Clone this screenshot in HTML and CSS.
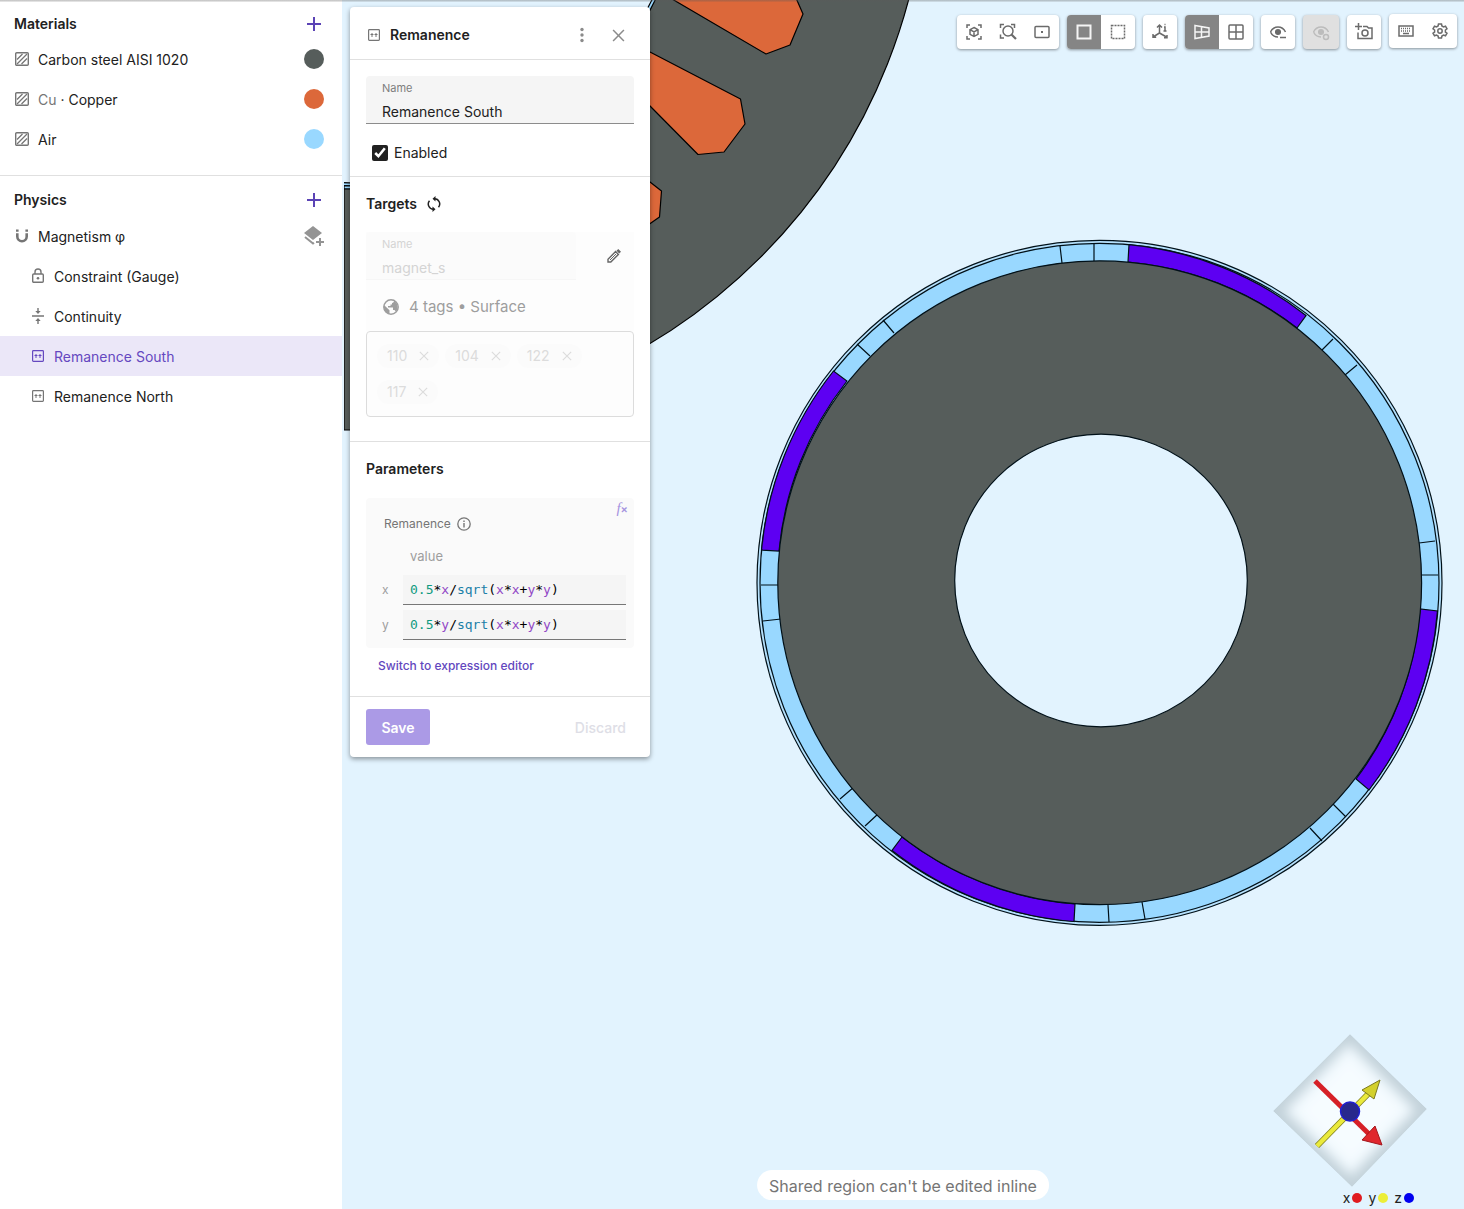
FILE: index.html
```html
<!DOCTYPE html>
<html lang="en">
<head>
    <meta charset="UTF-8">
    <meta name="viewport" content="width=device-width, initial-scale=1.0">
    <title>Magnetism - Remanence South</title>
    <link rel="stylesheet" href="styles.css">
</head>
<body>
    <!-- Shared icons -->
    <svg class="sprite" aria-hidden="true">
        <symbol id="i-plus" viewBox="0 0 16 16"><path d="M8 1v14M1 8h14" fill="none" stroke="currentColor" stroke-width="2"/></symbol>
        <symbol id="i-hatch" viewBox="0 0 14 14"><g fill="none" stroke="currentColor"><rect x=".7" y=".7" width="12.6" height="12.6" rx="1" stroke-width="1.400"/><path d="M2 7.500L7.500 2M2 12L12 2M6.500 12L12 6.500" stroke-width="1.300"/></g></symbol>
        <symbol id="i-rem" viewBox="0 0 12 12"><g fill="none" stroke="currentColor"><rect x=".6" y=".6" width="10.800" height="10.800" rx=".8" stroke-width="1.200"/><path d="M4 8V4M8 8V4M2.500 5.500h3M6.500 5.500h3" stroke-width="1"/></g></symbol>
        <symbol id="i-x" viewBox="0 0 12 12"><path d="M1 1l10 10M11 1L1 11" fill="none" stroke="currentColor" stroke-width="1.400"/></symbol>
        <symbol id="i-eye" viewBox="0 0 18 18"><path d="M1.500 9Q4 4 9 4t7.500 5M1.500 9Q4 14 9 14" fill="none" stroke="currentColor" stroke-width="1.500"/><circle cx="9" cy="9" r="2.300" fill="currentColor"/></symbol>
    </svg>

    <div class="app">
        <aside class="sidebar">
            <section class="group">
                <header class="group-head">
                    <h2>Materials</h2>
                    <button class="add" aria-label="Add material"><svg width="16" height="16"><use href="#i-plus"/></svg></button>
                </header>
                <ul>
                    <li class="row"><svg class="icon" width="14" height="14"><use href="#i-hatch"/></svg><span class="title">Carbon steel AISI 1020</span><i class="swatch steel"></i></li>
                    <li class="row"><svg class="icon" width="14" height="14"><use href="#i-hatch"/></svg><span class="title"><span class="symbol">Cu</span> · Copper</span><i class="swatch copper"></i></li>
                    <li class="row"><svg class="icon" width="14" height="14"><use href="#i-hatch"/></svg><span class="title">Air</span><i class="swatch air"></i></li>
                </ul>
            </section>
            <section class="group">
                <header class="group-head">
                    <h2>Physics</h2>
                    <button class="add" aria-label="Add physics"><svg width="16" height="16"><use href="#i-plus"/></svg></button>
                </header>
                <ul>
                    <li class="row">
                        <svg class="icon" width="14" height="14" viewBox="0 0 14 14"><path d="M2.300 4.300v3.200a4.700 4.700 0 0 0 9.400 0V4.300" fill="none" stroke="currentColor" stroke-width="2.600"/><path d="M1 .5h2.600v2.200H1zM10.400.5H13v2.200h-2.600z" fill="currentColor"/></svg>
                        <span class="title">Magnetism φ</span>
                        <button class="layers" aria-label="Add interaction"><svg width="20" height="20" viewBox="0 0 20 20"><path d="M9 0l9 7-9 7-9-7z" fill="currentColor"/><path d="M1 11l8 6.500 1-.8M16 12v8M12 16h8" fill="none" stroke="currentColor" stroke-width="2"/></svg></button>
                    </li>
                    <li class="row child">
                        <svg class="icon" width="12" height="16" viewBox="0 0 12 16"><g fill="none" stroke="currentColor" stroke-width="1.400"><rect x=".7" y="6" width="10.600" height="8.300" rx="1"/><path d="M3 6V4a3 3 0 0 1 6 0v2"/></g><circle cx="6" cy="10.200" r="1.300" fill="currentColor"/></svg>
                        <span class="title">Constraint (Gauge)</span>
                    </li>
                    <li class="row child">
                        <svg class="icon" width="12" height="16" viewBox="0 0 12 16"><path d="M0 8h12M6 0v4M6 12v4" fill="none" stroke="currentColor" stroke-width="1.400"/><path d="M3.300 3h5.400L6 6zM3.300 13h5.400L6 10z" fill="currentColor"/></svg>
                        <span class="title">Continuity</span>
                    </li>
                    <li class="row child selected"><svg class="icon" width="12" height="12"><use href="#i-rem"/></svg><span class="title">Remanence South</span></li>
                    <li class="row child"><svg class="icon" width="12" height="12"><use href="#i-rem"/></svg><span class="title">Remanence North</span></li>
                </ul>
            </section>
        </aside>

        <main class="stage">
            <!-- Motor cross section -->
            <svg class="model" viewBox="342 0 1122 1209" preserveAspectRatio="xMinYMin slice" role="img" aria-label="Motor cross section">
                <g stroke="#000" stroke-width="1.200" stroke-linejoin="round">
                    <circle cx="357" cy="-146" r="570.500" fill="#565d5b"/>
                    <circle cx="357" cy="-146" r="332" fill="#99d8ff"/>
                    <circle cx="357" cy="-146" r="329" fill="#e2f3fe"/>
                    <path d="M344 186h20v3h-20z" fill="#99d8ff"/>
                    <path d="M344 189h20v241h-20z" fill="#565d5b"/>
                    <g fill="#dc683a">
                        <path d="M672-1L766 54l24-9 13-31-7-16z"/>
                        <path d="M620 38l30 14 90.500 47 4.500 25-21 28-26 2.500-48-48.500-30-30z"/>
                        <path d="M640 174l10 8 11.500 9-2 26-10 7-10 3z"/>
                    </g>
                    <path d="M342 0h2v440h-2z" fill="#e2f3fe" stroke="none"/>
                </g>
                <g stroke="#001018" stroke-width="1.200" fill="none">
                    <circle cx="1099.500" cy="582.800" r="342.500" fill="#b5e1fd"/>
                    <circle cx="1099.500" cy="582.800" r="339.500" fill="#99d8ff"/>
                    <g fill="#5d00f2">
                        <path d="M1129 244.600A339 339 0 0 1 1306 315.500L1297 328A322 322 0 0 0 1128 262z"/>
                        <path d="M1437.500 611A339 339 0 0 1 1369 790L1356 779A322 322 0 0 0 1420 609z"/>
                        <path d="M1074 921.500A339 339 0 0 1 892 850.500L902 837A322 322 0 0 0 1075 904z"/>
                        <path d="M761.500 550A339 339 0 0 1 833.500 371L847 381A322 322 0 0 0 779 551z"/>
                    </g>
                    <path d="M1060 246l2 17M1094 244v17M1333 339l-11 11M1357 365l-12 10M1435 541l-16 2M1438 575h-17M1346 817l-13-13M1322 841l-12-13M1145 919l-3-17M1109 922l-1-17M865 826l13-12M840 799l14-12M763 621l18-2M761 585h18M857 344l13 12M883 320l11 13"/>
                    <circle cx="1099.700" cy="582.700" r="321.900" fill="#565d5b"/>
                    <circle cx="1101" cy="580.500" r="146.300" fill="#e2f3fe"/>
                </g>
            </svg>

            <form class="panel">
                <header class="panel-head">
                    <svg class="icon" width="12" height="12"><use href="#i-rem"/></svg>
                    <h2>Remanence</h2>
                    <button type="button" class="plain" aria-label="More"><svg width="4" height="16" viewBox="0 0 4 16" fill="currentColor"><circle cx="2" cy="2.500" r="1.700"/><circle cx="2" cy="8" r="1.700"/><circle cx="2" cy="13.500" r="1.700"/></svg></button>
                    <button type="button" class="plain" aria-label="Close"><svg width="13" height="13"><use href="#i-x"/></svg></button>
                </header>

                <section class="part">
                    <div class="field">
                        <label for="name">Name</label>
                        <input type="text" id="name" value="Remanence South">
                    </div>
                    <div class="check">
                        <input type="checkbox" id="enabled" checked>
                        <label for="enabled">Enabled</label>
                    </div>
                </section>

                <section class="part targets">
                    <h3>Targets
                        <button type="button" class="sync" aria-label="Refresh targets"><svg width="14" height="16" viewBox="0 0 14 16"><path d="M7.500 2.800a5.200 5.200 0 0 1 4 8.500M2.500 4.700a5.200 5.200 0 0 0 4 8.500" fill="none" stroke="currentColor" stroke-width="1.500"/><path d="M8.500 0v5.500L5.500 2.800zM5.500 10.500V16l3-2.800z" fill="currentColor"/></svg></button>
                    </h3>
                    <div class="target">
                        <div class="target-top">
                            <div class="field disabled">
                                <label for="region">Name</label>
                                <input type="text" id="region" value="magnet_s" disabled>
                            </div>
                            <button type="button" class="plain edit" aria-label="Edit region"><svg width="14" height="14" viewBox="0 0 14 14"><path d="M1 13v-2.800L8.600 2.600l2.800 2.800L3.800 13z" fill="none" stroke="currentColor" stroke-width="1.400"/><path d="M3 11l6-6" stroke="currentColor"/><path d="M9.500 1.800L11.300 0 14 2.700l-1.800 1.800z" fill="currentColor"/></svg></button>
                        </div>
                        <p class="tags"><svg width="16" height="16" viewBox="0 0 16 16"><circle cx="8" cy="8" r="7.200" fill="#fcfcfc" stroke="currentColor" stroke-width="1.500"/><path d="M1 6l5.500 5.200v3.600C3 14.500.5 11 1 6zM6.500 1.500l4.500-.2c.3 1.500-.5 2.500-2 2.700v1.500H7.500V7H5v1.500h5v2.500h1.500l1.300 1.500A7 7 0 0 0 14 5L11 1z" fill="currentColor"/></svg>4 tags • Surface</p>
                    </div>
                    <div class="chips">
                        <span class="chip">110 <svg width="10" height="10"><use href="#i-x"/></svg></span>
                        <span class="chip">104 <svg width="10" height="10"><use href="#i-x"/></svg></span>
                        <span class="chip">122 <svg width="10" height="10"><use href="#i-x"/></svg></span>
                        <span class="chip">117 <svg width="10" height="10"><use href="#i-x"/></svg></span>
                    </div>
                </section>

                <section class="part params">
                    <h3>Parameters</h3>
                    <div class="values">
                        <button type="button" class="fx" aria-label="Expression"><i>f</i><sub>×</sub></button>
                        <p class="param-name">Remanence <svg width="14" height="14" viewBox="0 0 14 14"><circle cx="7" cy="7" r="6.200" fill="none" stroke="currentColor" stroke-width="1.300"/><path d="M7 6v4.500M7 3.500V5" stroke="currentColor" stroke-width="1.400"/></svg></p>
                        <p class="value-head">value</p>
                        <div class="expr">
                            <label for="rx">x</label>
                            <div class="code">
                                <code><b class="num">0.5</b>*<b class="var">x</b>/<b class="fn">sqrt</b>(<b class="var">x</b>*<b class="var">x</b>+<b class="var">y</b>*<b class="var">y</b>)</code>
                                <input type="text" id="rx" value="0.5*x/sqrt(x*x+y*y)" spellcheck="false">
                            </div>
                        </div>
                        <div class="expr">
                            <label for="ry">y</label>
                            <div class="code">
                                <code><b class="num">0.5</b>*<b class="var">y</b>/<b class="fn">sqrt</b>(<b class="var">x</b>*<b class="var">x</b>+<b class="var">y</b>*<b class="var">y</b>)</code>
                                <input type="text" id="ry" value="0.5*y/sqrt(x*x+y*y)" spellcheck="false">
                            </div>
                        </div>
                    </div>
                    <a href="#" class="switch">Switch to expression editor</a>
                </section>

                <footer class="panel-foot">
                    <button type="submit" class="save">Save</button>
                    <button type="button" class="discard" disabled>Discard</button>
                </footer>
            </form>

            <nav class="toolbar" aria-label="View tools">
                <div class="tools">
                    <button aria-label="Fit all"><svg width="16" height="16" viewBox="0 0 16 16"><path d="M1 4V1h3M12 1h3v3M15 12v3h-3M4 15H1v-3M8 3.500l4 2.200v4.600l-4 2.200-4-2.200V5.700zM4 5.700L8 8l4-2.300M8 8v4.500"/></svg></button>
                    <button aria-label="Zoom to selection"><svg width="18" height="18" viewBox="0 0 18 18"><path d="M1.500 5V1.500H5M12 1.500h3.500V5M5 15H1.500v-3.500"/><circle cx="9" cy="8" r="5"/><path d="M12.500 11.500l4.500 4.500" stroke-width="2.200"/></svg></button>
                    <button aria-label="Center view"><svg width="16" height="16" viewBox="0 0 16 16"><rect x="1" y="2.500" width="14" height="11" rx="1"/><path d="M7 8h2" stroke-width="2"/></svg></button>
                </div>
                <div class="tools">
                    <button class="on" aria-label="Box select"><svg width="16" height="16" viewBox="0 0 16 16"><rect x="1.500" y="1.500" width="13" height="13" stroke-width="2"/></svg></button>
                    <button aria-label="Dashed select"><svg width="16" height="16" viewBox="0 0 16 16"><rect x="1.500" y="1.500" width="13" height="13" stroke-dasharray="2 1"/></svg></button>
                </div>
                <div class="tools">
                    <button aria-label="Axes"><svg width="18" height="18" viewBox="0 0 18 18"><path d="M8.500 2v8L2 14M8.500 10l7 4M6 4.500L8.500 2 11 4.500M2 11v3.200h3.200M13 14.700h3V12M13 4h1v4M12.500 8h3M13.500 1.500h1"/></svg></button>
                </div>
                <div class="tools">
                    <button class="on" aria-label="Perspective"><svg width="18" height="18" viewBox="0 0 18 18"><path d="M2 2.500l14 2.500v8L2 15.500zM8.500 3.500v11M2 9h14"/></svg></button>
                    <button aria-label="Orthographic"><svg width="16" height="16" viewBox="0 0 16 16"><rect x="1" y="1" width="14" height="14" rx="1"/><path d="M8 1v14M1 8h14"/></svg></button>
                </div>
                <div class="tools">
                    <button aria-label="Hide"><svg width="18" height="18"><use href="#i-eye"/><path d="M11 14.500h6"/></svg></button>
                </div>
                <div class="tools off">
                    <button disabled aria-label="Reset visibility"><svg width="18" height="18"><use href="#i-eye"/><circle cx="14" cy="14" r="2.500"/></svg></button>
                </div>
                <div class="tools">
                    <button aria-label="Take screenshot"><svg width="18" height="18" viewBox="0 0 18 18"><path d="M3.500 0v7M0 3.500h7M8 3.500h4L13.500 5H17v10.500H3V9.500"/><circle cx="10" cy="10" r="3"/></svg></button>
                </div>
                <div class="tools settings">
                    <button aria-label="Keyboard shortcuts"><svg width="16" height="16" viewBox="0 0 16 16"><rect x="1" y="3" width="14" height="10"/><path d="M3 5.500h10M3 8h10" stroke-dasharray="1 1"/><path d="M5 10.500h6"/></svg></button>
                    <button aria-label="Settings"><svg width="16" height="16" viewBox="0 0 16 16"><path d="M6.500 1h3l.4 2 1.600 1 2-.8 1.500 2.600L13.400 7v2l1.600 1.200-1.500 2.600-2-.8-1.600 1-.4 2h-3l-.4-2-1.600-1-2 .8L1 10.200 2.600 9V7L1 5.800l1.500-2.600 2 .8 1.600-1z"/><circle cx="8" cy="8" r="2.200"/></svg></button>
                </div>
            </nav>

            <p class="toast">Shared region can't be edited inline</p>

            <div class="gizmo">
                <svg width="156" height="154" viewBox="0 0 156 154">
                    <defs>
                        <filter id="soft" x="-20%" y="-20%" width="140%" height="140%"><feGaussianBlur stdDeviation="6"/></filter>
                        <clipPath id="cube"><path d="M78 0l77 75-75 78L1 77z"/></clipPath>
                    </defs>
                    <g clip-path="url(#cube)">
                        <path d="M78 0l77 75-75 78L1 77z" fill="#c3d2da"/>
                        <path d="M77 17l59 59-57 59-59-58z" fill="#f6fcff" stroke="#f1f9fe" stroke-width="10" filter="url(#soft)"/>
                    </g>
                    <path d="M45 112l54-55" stroke="#807f1c" stroke-width="6"/>
                    <path d="M45 112l54-55" stroke="#eaea3c" stroke-width="4.500"/>
                    <path d="M108 46L90 56l12 9z" fill="#d3d02c" stroke="#7c7a20" stroke-width="1"/>
                    <path d="M43 47l54 53" stroke="#d62027" stroke-width="5"/>
                    <path d="M110 111l-7-19-13 14z" fill="#e0272d" stroke="#a3161c" stroke-width="1"/>
                    <circle cx="78" cy="77.500" r="9.500" fill="#28288c" stroke="#2020d0" stroke-width="1.500"/>
                </svg>
                <p class="axes">x<i class="dot ax"></i> y<i class="dot ay"></i> z<i class="dot az"></i></p>
            </div>
        </main>
    </div>
</body>
</html>
```

FILE: styles.css
```css
* {
    box-sizing: border-box;
}
body {
    margin: 0;
    font-family: Inter, "Liberation Sans", sans-serif;
    font-size: 14px;
    line-height: 20px;
    color: #212121;
}
h2, h3, p, ul {
    margin: 0;
    padding: 0;
    font-size: 14px;
    font-weight: 600;
}
p, ul {
    font-weight: 400;
}
button, input {
    font: inherit;
    color: inherit;
    border: 0;
    padding: 0;
    background: none;
}
button {
    cursor: pointer;
}
svg {
    display: block;
    flex: none;
}
.sprite {
    position: absolute;
    width: 0;
    height: 0;
}
.app {
    position: relative;
    display: grid;
    grid-template-columns: 342px 1fr;
    min-height: 100vh;
}
/* shade under the app bar */
.app::after {
    content: "";
    position: absolute;
    top: 0;
    left: 0;
    right: 0;
    height: 2px;
    background: linear-gradient(rgba(90, 90, 90, 0.4), rgba(90, 90, 90, 0.1));
}

/* Sidebar */
.group + .group {
    border-top: 1px solid #e0e0e0;
}
.group:first-child {
    padding-bottom: 16px;
}
.group-head {
    display: flex;
    justify-content: space-between;
    align-items: center;
    height: 40px;
    padding: 8px 20px 0 14px;
}
.group:first-child .group-head {
    height: 39px;
}
.add {
    color: #5b43b5;
}
.row {
    display: flex;
    align-items: center;
    gap: 9px;
    height: 40px;
    padding: 0 18px 0 15px;
}
.child {
    gap: 10px;
    padding-left: 32px;
}
.title {
    padding-top: 2px;
}
.icon {
    color: #757575;
}
.symbol {
    color: #757575;
}
.swatch {
    width: 20px;
    height: 20px;
    margin-left: auto;
    border-radius: 50%;
}
.steel { background: #565d5b; }
.copper { background: #dc683a; }
.air { background: #99d8ff; }
.layers {
    margin-left: auto;
    color: #949494;
}
.selected,
.selected .icon {
    color: #6548c0;
}
.selected {
    background: #ebe7f8;
}

/* Canvas */
.stage {
    position: relative;
    padding: 7px 8px;
    background: #e2f3fe;
    overflow: hidden;
}
.model {
    position: absolute;
    inset: 0;
    width: 100%;
    height: 100%;
}

/* Property panel */
.panel {
    position: relative;
    width: 300px;
    background: #fff;
    border-radius: 4px;
    box-shadow: 0 2px 5px rgba(0, 0, 0, 0.4);
}
.panel-head {
    display: flex;
    align-items: center;
    height: 53px;
    padding: 4px 25px 0 18px;
    border-bottom: 1px solid #e0e0e0;
}
.panel-head h2 {
    flex: 1;
    margin-left: 10px;
}
.plain {
    color: #8b8b8b;
}
.plain + .plain {
    margin-left: 28px;
}
.part {
    padding: 16px;
    border-bottom: 1px solid #e0e0e0;
}
.field {
    height: 48px;
    padding: 4px 16px 0;
    background: #f5f5f5;
    border-bottom: 1px solid #8c8c8c;
    border-radius: 4px 4px 0 0;
}
.field label {
    display: block;
    font-size: 11px;
    line-height: 16px;
    color: #7d7d7d;
}
.field input {
    display: block;
    width: 100%;
    height: 26px;
    padding-top: 4px;
    line-height: 20px;
}
.check {
    display: flex;
    align-items: center;
    gap: 6px;
    margin-top: 19px;
    padding-left: 6px;
}
.check input {
    width: 16px;
    height: 16px;
    margin: 0;
    accent-color: #212121;
}
.part:nth-of-type(1) {
    padding-bottom: 13px;
}
.targets {
    padding: 17px 16px 24px;
}
.targets h3 {
    display: flex;
    gap: 10px;
    align-items: center;
}
.target {
    margin-top: 18px;
    height: 99px;
    background: #fdfdfd;
}
.target-top {
    display: flex;
    justify-content: space-between;
    padding-right: 13px;
}
.disabled {
    width: 210px;
    background: #fbfbfb;
    border-color: #f6f6f6;
}
.disabled label,
.disabled input {
    color: #d4d4d4;
}
.edit {
    color: #666;
}
.tags {
    display: flex;
    align-items: center;
    gap: 10px;
    padding: 17px 17px 0;
    font-size: 15px;
    color: #9e9e9e;
}
.chips {
    display: flex;
    flex-wrap: wrap;
    gap: 12px 6px;
    height: 86px;
    padding: 12px 10px;
    border: 1px solid #dcdcdc;
    border-radius: 4px;
    background: #fdfdfd;
}
.chip {
    display: flex;
    align-items: center;
    gap: 12px;
    height: 24px;
    padding: 0 10px;
    border-radius: 12px;
    background: #fbfbfb;
    font-size: 14px;
    color: #dcdcdc;
}
.params {
    padding: 17px 16px 20px;
}
.values {
    position: relative;
    height: 150px;
    margin-top: 19px;
    padding: 16px 8px 0 16px;
    background: #fafafa;
    border-radius: 4px;
}
.fx {
    position: absolute;
    top: 0;
    right: 6px;
    font-family: "Liberation Serif", serif;
    font-size: 15px;
    color: #a593df;
}
.fx sub {
    font-family: Inter, sans-serif;
    font-size: 11px;
    font-weight: 600;
    line-height: 1;
    vertical-align: baseline;
}
.param-name {
    display: flex;
    align-items: center;
    gap: 6px;
    padding-left: 2px;
    font-size: 12px;
    color: #757575;
}
.value-head {
    margin: 12px 0 9px 28px;
    font-size: 13px;
    color: #9e9e9e;
}
.expr {
    display: flex;
    align-items: center;
    height: 30px;
    margin-bottom: 5px;
}
.expr label {
    width: 21px;
    font-size: 12px;
    color: #9e9e9e;
}
.code {
    position: relative;
    flex: 1;
    height: 30px;
    background: #f5f5f5;
    border-bottom: 1px solid #777;
}
.code code,
.code input {
    display: block;
    width: 100%;
    padding: 0 7px;
    font-family: "DejaVu Sans Mono", monospace;
    font-size: 13px;
    line-height: 30px;
    color: #000;
}
.code input {
    position: absolute;
    inset: 0;
    color: transparent;
    caret-color: #000;
}
.code b {
    font-weight: 400;
}
.code .num { color: #109a80; }
.code .var { color: #9148c6; }
.code .fn { color: #1a7fa8; }
.switch {
    display: block;
    margin: 8px 12px 0;
    font-size: 12px;
    font-weight: 500;
    color: #6247be;
    text-decoration: none;
}
.panel-foot {
    display: flex;
    justify-content: space-between;
    padding: 12px 16px;
}
.panel-foot button {
    height: 36px;
    padding-top: 2px;
    font-weight: 500;
}
.save {
    width: 64px;
    border-radius: 3px;
    background: #ab9ae6;
    color: #fff;
}
.panel-foot .save {
    font-weight: 600;
}
.discard {
    padding: 0 8px;
    color: #dedee6;
}

/* View toolbar */
.toolbar {
    position: absolute;
    top: 15px;
    right: 7px;
    display: flex;
    gap: 8px;
}
.tools {
    display: flex;
    height: 34px;
    background: #fff;
    border-radius: 4px;
    box-shadow: 0 1px 3px rgba(0, 0, 0, 0.4);
    overflow: hidden;
}
.tools button {
    display: flex;
    align-items: center;
    justify-content: center;
    width: 34px;
    color: #6b6b6b;
}
.tools svg {
    fill: none;
    stroke: currentColor;
    stroke-width: 1.5px;
}
.tools .on {
    background: #858585;
    color: #f5f5f5;
}
.tools.off {
    background: #e0e0e0;
}
.tools.off button {
    width: 36px;
    color: #bcbcbc;
}
.settings {
    margin-top: -1px;
}

.toast {
    position: absolute;
    bottom: 9px;
    left: 50%;
    transform: translateX(-50%);
    padding: 6px 12px 4px;
    border-radius: 15px;
    background: #fff;
    font-size: 16px;
    color: #757575;
    white-space: nowrap;
}
.gizmo {
    position: absolute;
    right: 36px;
    bottom: 1px;
}
.axes {
    display: flex;
    align-items: center;
    justify-content: flex-end;
    gap: 2px;
    padding-right: 14px;
}
.dot {
    width: 10px;
    height: 10px;
    margin-right: 4px;
    border-radius: 50%;
}
.dot:last-child {
    margin-right: 0;
}
.ax { background: #e01b20; }
.ay { background: #ecee38; }
.az { background: #0000f0; }
```
